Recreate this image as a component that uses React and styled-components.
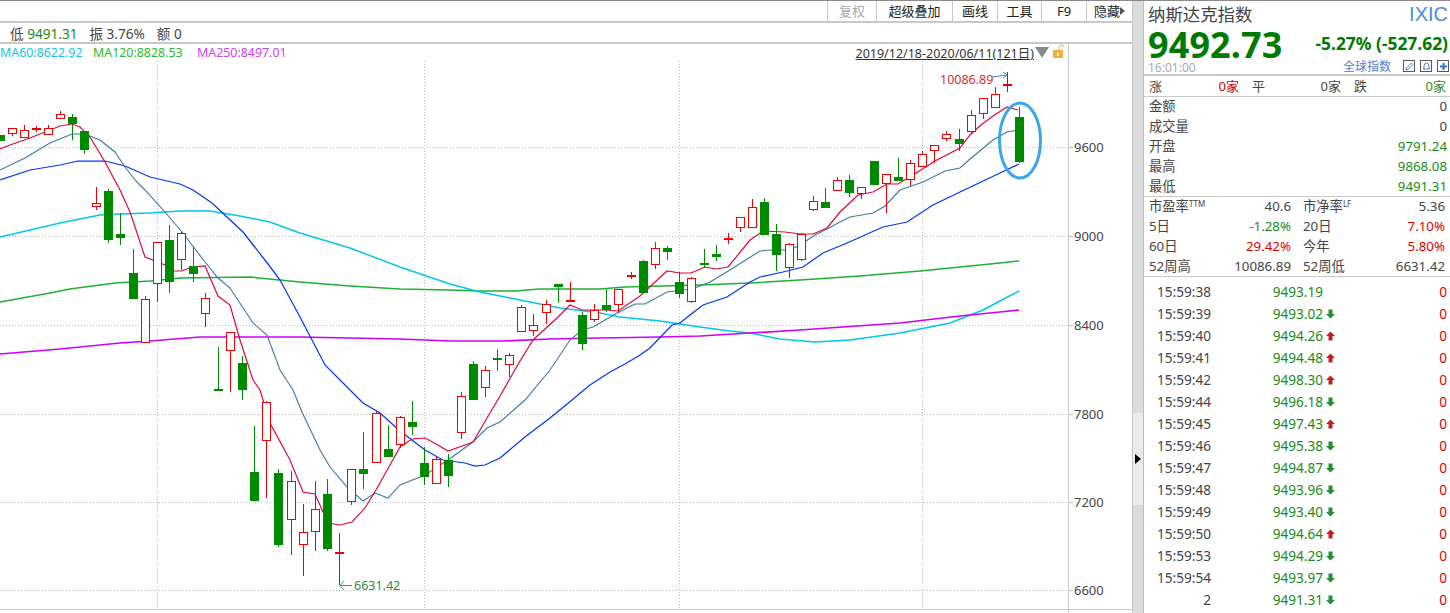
import React from 'react';
import styled, { createGlobalStyle } from 'styled-components';

const Global = createGlobalStyle`
  html, body { margin: 0; padding: 0; background: #fff; overflow: hidden; }
  body { font-family: "Noto Sans", "Noto Sans CJK SC", sans-serif; }
`;

const Shell = styled.div`
  display: flex; width: 1450px; height: 613px; overflow: hidden; background: #fff;
  border-top: 1px solid #8a8a8a; box-sizing: border-box;
  font-size: 13px; color: #444;
`;
const LeftPane = styled.div`
  width: 1132px; display: flex; flex-direction: column; border-right: 1px solid #c8c8c8; box-sizing: content-box;
`;
const Toolbar = styled.div`
  height: 20px; display: flex; justify-content: flex-end; border-bottom: 2px solid #c8c8c8;
`;
const ToolButton = styled.div`
  width: ${p => p.$w}px; box-sizing: border-box; border-left: 1px solid #c8c8c8;
  display: flex; align-items: center; justify-content: center;
  font-size: 13px; line-height: 20px; color: ${p => (p.$off ? '#aaa' : '#222')};
`;
const Tri = styled.span`
  width: 0; height: 0; border-left: 5px solid #555; border-top: 4px solid transparent; border-bottom: 4px solid transparent;
`;
const InfoBar = styled.div`
  height: 19px; display: flex; align-items: center; gap: 12px; padding-left: 10px;
  border-bottom: 2px solid #c8c8c8; font-size: 13.6px; color: #444; white-space: nowrap;
`;
const Green = styled.span` color: #1a8a1a; `;
const ChartHead = styled.div`
  width: 1068px; height: 17px; display: flex; align-items: center; border-right: 1px solid #c8c8c8;
  font-size: 12.4px; white-space: nowrap;
`;
const Ma = styled.span` color: ${p => p.$c}; width: ${p => p.$w}px; flex: none; `;
const RangeBox = styled.div`
  margin-left: auto; display: flex; align-items: center; height: 17px; color: #333; padding-right: 3px;
`;
const RangeText = styled.span` text-decoration: underline; font-size: 12.5px; margin-right: 1px; `;
const ChartArea = styled.div` flex: 1; min-height: 0; `;
const Splitter = styled.div`
  width: 11px; background: #dcdcdc; border-right: 1px solid #bdbdbd; padding-top: 412px; box-sizing: border-box; flex: none;
`;
const SplitHandle = styled.div`
  height: 92px; background: #ebebeb; display: flex; align-items: center; justify-content: center;
`;
const SplitArrow = styled.span`
  width: 0; height: 0; border-left: 6px solid #000; border-top: 5px solid transparent; border-bottom: 5px solid transparent;
`;
const Panel = styled.div`
  flex: 1; display: flex; flex-direction: column; min-width: 0; padding: 0 2px 0 4px;
`;
const Head = styled.div` display: flex; justify-content: space-between; align-items: center; height: 27px; `;
const Title = styled.div` font-size: 17.4px; color: #444; line-height: 27px; `;
const Code = styled.div` font-size: 20px; color: #4a8fe0; line-height: 27px; font-family: "Liberation Sans", sans-serif; `;
const PriceRow = styled.div` display: flex; justify-content: space-between; align-items: center; height: 33px; `;
const Price = styled.div` font-size: 36px; font-weight: 700; color: #007a00; line-height: 33px; letter-spacing: 0.1px; `;
const Change = styled.div` font-size: 17.4px; font-weight: 700; color: #007a00; margin-top: -4px; `;
const TimeRow = styled.div` display: flex; justify-content: space-between; align-items: center; height: 13px; `;
const Stamp = styled.div` font-size: 12px; color: #aaa; `;
const Tools = styled.div` display: flex; align-items: center; color: #4a80d0; font-size: 12px; margin-right: -1px; margin-top: -3px; `;
const ToolLabel = styled.span` margin-right: 7px; `;
const Ico = styled.span`
  width: 10px; height: 10px; border: 1px solid #5a5a5a; display: inline-flex; align-items: center; justify-content: center; margin-left: ${p => p.$ml || 5}px;
`;
const Rule = styled.div` height: ${p => p.$h || 1}px; background: #c8c8c8; margin: 0 -2px 0 -4px; flex: none; `;
const Breadth = styled.div` display: grid; grid-template-columns: 62px 28px 74px 28px 77px 28px; height: 20px; align-items: center; padding-left: 1px; width: 298px; `;
const Cell = styled.span`
  color: ${p => p.$c || '#444'}; text-align: ${p => (p.$r ? 'right' : 'left')}; white-space: nowrap; line-height: 20px;
  padding-left: ${p => p.$pl || 0}px;
`;
const Block = styled.div` margin-top: -1px; font-size: 13.3px; `;
const KV = styled.div` display: flex; justify-content: space-between; height: 20px; align-items: center; padding: 0 1px 0 1px; line-height: 20px; `;
const Grid4 = styled.div` display: grid; grid-template-columns: 142px 12px 142px; padding: 0 2px 0 1px; `;
const Pair = styled.div` display: flex; justify-content: space-between; height: 20px; align-items: center; line-height: 20px; white-space: nowrap; `;
const Sup = styled.sup` font-size: 8px; line-height: 0; vertical-align: 4px; `;
const Ticks = styled.div` display: flex; flex-direction: column; padding-top: 4px; font-size: 13.6px; `;
const TickRow = styled.div` display: grid; grid-template-columns: 63px 61px 51px 1fr 1fr; height: 22px; align-items: center; line-height: 22px; padding-right: 1px; `;
const TickTime = styled.span` text-align: right; color: #444; `;
const TickPrice = styled.span` grid-column: 3; color: #1a8a1a; text-align: right; `;
const TickArrow = styled.span` grid-column: 4; padding-left: 3px; display: flex; align-items: center; `;
const TickVol = styled.span` grid-column: 5; color: #e00000; text-align: right; `;

// [x, wickTop, wickBottom, bodyTop, bodyBottom, up]
const C = [
  [0,135,141,135,141,0],[11.5,128,136,128,133,1],[23.5,125,137,130,137,1],[35.5,126,132,128,129,1],[48,125,134,128,134,1],[60,111,118,114,118,1],
  [72,114,140,117,124,0],[84,131,154,131,150,0],[96,187,210,203,206,1],[108,189,243,191,240,0],[120,213,245,234,238,0],[133,249,299,273,299,0],
  [145,296,342,299,342,1],[157,242,302,242,283,1],[169,225,293,240,282,0],[181,232,270,233,259,1],[193,247,282,266,274,0],[205,293,327,298,313,1],
  [218,347,391,389,390,0],[230,332,392,332,350,1],[242,356,400,363,390,0],[254,426,501,472,501,0],[266,401,498,402,440,1],[278,469,547,473,545,0],
  [291,471,555,481,519,1],[303,504,576,532,544,1],[315,481,551,509,531,1],[327,479,551,494,549,0],[339,533,585,552,554,1],[351,469,505,469,501,1],
  [363,432,489,469,474,0],[376,411,462,413,462,1],[388,425,457,449,457,0],[400,416,448,417,444,1],[412,401,435,422,427,0],[424,447,485,463,477,0],
  [436,457,483,459,483,1],[448,454,487,460,476,0],[461,392,439,396,432,1],[473,361,400,364,400,0],[485,366,397,370,387,1],[497,349,371,358,360,0],
  [509,353,377,355,364,1],[521,305,332,307,331,1],[533,314,336,325,330,1],[546,300,324,304,312,1],[558,284,303,284,287,0],[570,282,301,300,301,1],
  [582,312,350,315,344,0],[594,304,322,310,319,1],[606,289,312,305,310,0],[618,289,313,289,304,1],[631,272,279,275,276,1],[643,260,293,261,293,0],
  [655,242,269,248,264,1],[667,246,260,248,252,0],[679,272,298,282,294,0],[691,277,303,278,301,1],[704,249,268,263,264,0],[716,245,261,254,257,0],
  [728,233,244,238,239,1],[740,217,232,217,227,1],[752,199,227,207,227,1],[764,198,235,202,235,0],[776,224,271,234,255,0],[789,243,278,244,267,1],
  [801,233,261,234,259,1],[813,196,211,201,209,1],[825,188,208,202,208,0],[837,177,190,180,190,1],[849,175,197,180,193,0],[861,187,199,187,193,1],
  [874,161,185,161,185,0],[886,174,213,174,183,1],[898,158,181,177,181,0],[910,160,186,163,179,1],[922,151,166,154,166,1],[934,145,163,145,150,1],
  [946,131,141,134,138,1],[959,129,151,139,144,0],[971,110,133,115,131,1],[983,98,119,98,113,1],[995,87,107,94,107,1],[1007,72,92,84,86,1],
  [1019,107,163,117,162,0],
];

const MA5 = '0,149 10,145 30,138 45,132 60,126 72,124 80,127 90,137 105,162 120,190 130,212 145,257 165,265 172,271 182,271 192,267 205,266 218,296 230,305 240,340 253,380 260,390 270,423 290,460 303,492 315,494 328,523 340,525 352,522 365,508 376,490 390,465 400,447 412,439 425,438 436,444 448,451 462,446 473,442 487,418 500,396 520,361 533,340 557,318 570,305 582,310 594,310 606,310 618,311 640,296 667,271 680,273 691,273 705,267 716,269 728,267 750,240 763,231 785,232 800,234 813,234 827,228 840,212 858,195 873,192 887,184 898,184 913,175 935,161 960,148 970,135 981,125 993,116 1007,107 1018,110';
const MA10 = '0,170 25,158 50,143 72,134 85,134 100,140 115,152 125,167 135,180 145,190 165,212 182,232 205,262 218,278 230,288 253,323 267,335 280,370 293,390 302,412 320,450 330,467 348,488 363,501 375,493 388,498 400,485 425,475 448,460 473,442 487,428 500,422 525,400 550,370 570,340 582,330 593,327 617,313 635,304 645,304 667,292 692,289 710,282 730,270 760,251 770,250 790,250 800,245 815,235 827,229 840,222 850,217 873,213 885,206 900,190 923,182 945,171 960,168 970,159 993,140 1007,132 1018,130';
const MA20 = '0,180 30,170 60,165 78,161 105,161 125,166 150,177 180,184 193,190 212,203 243,232 268,264 280,280 300,317 325,365 350,390 363,403 380,413 400,431 425,450 443,460 465,463 475,466 485,465 500,458 525,437 550,418 572,400 590,385 610,372 625,364 640,355 650,348 672,325 680,323 690,315 703,305 727,297 750,282 760,277 783,272 803,267 823,253 847,243 883,227 907,222 933,205 960,192 1000,173 1019,164';
const MA60 = '0,237 60,223 100,215 120,214 150,213 180,211 210,211 240,216 270,222 300,233 350,248 400,267 450,284 480,292 520,300 560,308 600,313 620,317 660,321 700,327 730,331 750,333 780,339 815,342 850,340 900,333 950,323 983,310 1000,301 1019,291';
const MA120 = '0,302 50,293 70,289 115,283 150,281 180,278 250,277 300,282 350,286 400,289 450,290 480,291 515,291 540,289 600,289 625,287 700,285 750,283 800,280 860,276 920,271 1000,263 1019,261';
const MA250 = '0,354 60,349 120,343 150,341 200,337 300,337 350,338 400,339 450,341 503,341 550,339 600,338 660,337 700,336 750,333 800,330 900,323 960,316 1000,312 1019,310';

const RED = '#f00000', GRN = '#008a00';
const Ox = 61; // chart top in page coords

function Chart() {
  const Y = v => v - Ox;
  return (
    <svg width="1132" height="552" viewBox="0 0 1132 552" style={{ display: 'block' }}>
      {[147, 236, 325, 414, 502, 590].map(y => (
        <line key={y} x1="0" x2="1068" y1={Y(y) + 0.5} y2={Y(y) + 0.5} stroke="#bdbdbd" strokeDasharray="1 2" />
      ))}
      {[157, 424, 679, 922].map(x => (
        <line key={x} x1={x + 0.5} x2={x + 0.5} y1={0} y2={Y(610)} stroke="#bdbdbd" strokeDasharray="1 2" />
      ))}
      <line x1="1068.5" x2="1068.5" y1="0" y2="552" stroke="#c8c8c8" />
      <line x1="0" x2="1132" y1={Y(609) + 0.5} y2={Y(609) + 0.5} stroke="#c8c8c8" />
      {[[MA120, '#1fb032', 1.5], [MA60, '#00c8e6', 1.5], [MA250, '#cc00f5', 1.7], [MA20, '#0038f0', 1.25], [MA10, '#3a78a8', 1.1], [MA5, '#dc0a3c', 1.2]].map(([pts, col, w]) => (
        <polyline key={col} fill="none" stroke={col} strokeWidth={w} points={pts.split(' ').map(p => { const [a, b] = p.split(','); return `${a},${+b - Ox}`; }).join(' ')} />
      ))}
      {C.map(([x, wt, wb, bt, bb, up]) => {
        const col = up ? RED : GRN;
        const cx = Math.round(x) + 0.5;
        const h = bb - bt;
        return (
          <g key={x}>
            <line x1={cx} x2={cx} y1={Y(wt)} y2={Y(up ? bt : wb)} stroke={col} />
            {up ? <line x1={cx} x2={cx} y1={Y(bb)} y2={Y(wb)} stroke={col} /> : null}
            {up
              ? (h <= 2
                ? <rect x={cx - 4.5} y={Y(bt)} width="9" height="2" fill={col} />
                : <rect x={cx - 4} y={Y(bt) + 0.5} width="8" height={h} fill="#fff" stroke={col} />)
              : <rect x={cx - 4.5} y={Y(bt)} width="9" height={Math.max(h, 2)} fill={col} />}
          </g>
        );
      })}
      <path d={`M992 ${Y(77)}L1007 ${Y(75)}M1003 ${Y(72)}L1007.5 ${Y(75)}L1003 ${Y(78)}`} fill="none" stroke="#3a88a8" />
      <path d={`M340 ${Y(585.5)}H352M344 ${Y(581)}L340 ${Y(585.5)}L344 ${Y(590)}`} fill="none" stroke="#3a88a8" />
      <text x="940" y={Y(84)} fontSize="12.5" fill="#d03030">10086.89</text>
      <text x="354" y={Y(590)} fontSize="12.5" fill="#2e8a4a">6631.42</text>
      {[[9600, 147], [9000, 236], [8400, 325], [7800, 414], [7200, 502], [6600, 590]].map(([v, y]) => (
        <g key={v}>
          <line x1="1068" x2="1073" y1={Y(y) + 0.5} y2={Y(y) + 0.5} stroke="#bdbdbd" />
          <text x="1074" y={Y(y) + 5} fontSize="13" fill="#444">{v}</text>
        </g>
      ))}
      <ellipse cx="1020" cy={Y(140.5)} rx="20.5" ry="37.5" fill="none" stroke="#3aa6ec" strokeWidth="3" />
    </svg>
  );
}

const Arrow = ({ up }) => (
  <svg width="9" height="10" viewBox="0 0 9 10">
    <path d={up ? 'M4.5 .5L9 5H6.5V9.5H2.5V5H0Z' : 'M4.5 9.5L9 5H6.5V.5H2.5V5H0Z'} fill={up ? '#c02020' : '#2a8a3a'} />
  </svg>
);

const TICKS = [
  ['15:59:38', '9493.19', null], ['15:59:39', '9493.02', 0], ['15:59:40', '9494.26', 1], ['15:59:41', '9494.48', 1], ['15:59:42', '9498.30', 1],
  ['15:59:44', '9496.18', 0], ['15:59:45', '9497.43', 1], ['15:59:46', '9495.38', 0], ['15:59:47', '9494.87', 0], ['15:59:48', '9493.96', 0],
  ['15:59:49', '9493.40', 0], ['15:59:50', '9494.64', 1], ['15:59:53', '9494.29', 0], ['15:59:54', '9493.97', 0], ['2', '9491.31', 0],
];

export default function App() {
  return (
    <Shell>
      <Global />
      <LeftPane>
        <Toolbar>
          <ToolButton $off $w={49}>复权</ToolButton>
          <ToolButton $w={76}>超级叠加</ToolButton>
          <ToolButton $w={45}>画线</ToolButton>
          <ToolButton $w={44}>工具</ToolButton>
          <ToolButton $w={45}>F9</ToolButton>
          <ToolButton $w={46}>隐藏<Tri /></ToolButton>
        </Toolbar>
        <InfoBar>
          <span>低 <Green>9491.31</Green></span>
          <span>振 3.76%</span>
          <span>额 0</span>
        </InfoBar>
        <ChartHead>
          <Ma $c="#16c4e0" $w={93}>MA60:8622.92</Ma>
          <Ma $c="#2cb82c" $w={104}>MA120:8828.53</Ma>
          <Ma $c="#d040f0" $w={100}>MA250:8497.01</Ma>
          <RangeBox>
            <RangeText>2019/12/18-2020/06/11(121日)</RangeText>
            <svg width="30" height="17" viewBox="0 0 30 17">
              <path d="M0 3H14L7 14Z" fill="#8a8a8a" />
              <rect x="18" y="6" width="10" height="8" fill="#f0b040" />
              <rect x="22" y="9" width="2" height="3" fill="#fff" />
              <path d="M24 6V3Q24 1 26.5 1Q29 1 29 3" fill="none" stroke="#f0b040" />
            </svg>
          </RangeBox>
        </ChartHead>
        <ChartArea><Chart /></ChartArea>
      </LeftPane>
      <Splitter><SplitHandle><SplitArrow /></SplitHandle></Splitter>
      <Panel>
        <Head><Title>纳斯达克指数</Title><Code>IXIC</Code></Head>
        <PriceRow><Price>9492.73</Price><Change>-5.27% (-527.62)</Change></PriceRow>
        <TimeRow>
          <Stamp>16:01:00</Stamp>
          <Tools>
            <ToolLabel>全球指数</ToolLabel>
            <Ico $ml={0}><svg width="9" height="9" viewBox="0 0 9 9"><path d="M1 8L1.5 6L6.5 1L8 2.5L3 7.5Z" fill="none" stroke="#4a80d0" /></svg></Ico>
            <Ico><svg width="9" height="9" viewBox="0 0 9 9"><path d="M1 7H8M2 7V4Q2 1 4.5 1Q7 1 7 4V7" fill="none" stroke="#4a80d0" /></svg></Ico>
            <Ico><svg width="9" height="9" viewBox="0 0 9 9"><path d="M4.5 1V8M1 4.5H8" fill="none" stroke="#3a70d8" strokeWidth="2" /></svg></Ico>
          </Tools>
        </TimeRow>
        <Rule $h={2} />
        <Breadth>
          <Cell>涨</Cell><Cell $r $c="#d00000">0家</Cell>
          <Cell $pl={13}>平</Cell><Cell $r>0家</Cell>
          <Cell $pl={13}>跌</Cell><Cell $r $c="#3a8a2a">0家</Cell>
        </Breadth>
        <Rule />
        <Block>
          <KV><span>金额</span><span>0</span></KV>
          <KV><span>成交量</span><span>0</span></KV>
          <KV><span>开盘</span><Green>9791.24</Green></KV>
          <KV><span>最高</span><Green>9868.08</Green></KV>
          <KV><span>最低</span><Green>9491.31</Green></KV>
        </Block>
        <Rule />
        <Block>
          <Grid4>
            <Pair><span>市盈率<Sup>TTM</Sup></span><span>40.6</span></Pair><span />
            <Pair><span>市净率<Sup>LF</Sup></span><span>5.36</span></Pair>
            <Pair><span>5日</span><Green>-1.28%</Green></Pair><span />
            <Pair><span>20日</span><Cell $c="#e00000">7.10%</Cell></Pair>
            <Pair><span>60日</span><Cell $c="#e00000">29.42%</Cell></Pair><span />
            <Pair><span>今年</span><Cell $c="#e00000">5.80%</Cell></Pair>
            <Pair><span>52周高</span><span>10086.89</span></Pair><span />
            <Pair><span>52周低</span><span>6631.42</span></Pair>
          </Grid4>
        </Block>
        <Rule />
        <Ticks>
          {TICKS.map(([t, p, d], i) => (
            <TickRow key={i}>
              <TickTime>{t}</TickTime>
              <TickPrice>{p}</TickPrice>
              <TickArrow>{d === null ? null : <Arrow up={d === 1} />}</TickArrow>
              <TickVol>0</TickVol>
            </TickRow>
          ))}
        </Ticks>
      </Panel>
    </Shell>
  );
}
